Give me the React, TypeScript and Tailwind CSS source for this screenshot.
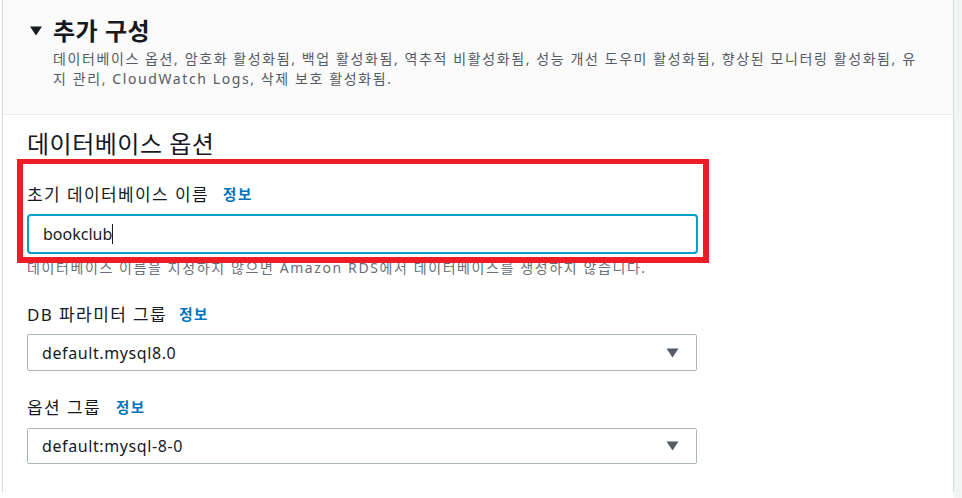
import React from "react";

const FONT = { fontFamily: '"Noto Sans", "Noto Sans CJK KR", sans-serif' };

function Caret() {
  return (
    <svg width="13" height="10" viewBox="0 0 13 10" className="shrink-0">
      <path d="M0.5 0.5 H12.5 L6.5 9.5 Z" fill="#545b64" />
    </svg>
  );
}

function SelectBox({ value, h }: { value: string; h: string }) {
  return (
    <div className={`w-[670px] ${h} border border-[#aab7b8] rounded-[2px] bg-white flex items-center justify-between pl-[14px] pr-[17px]`}>
      <span className="text-[16px] tracking-[0.6px] text-[#16191f]">{value}</span>
      <Caret />
    </div>
  );
}

function Label({ text, gap }: { text: string; gap: string }) {
  return (
    <div className={`flex items-center ${gap} h-[20px]`}>
      <span className="text-[17px] tracking-[1.4px] text-[#16191f]">{text}</span>
      <span className="text-[14.5px] tracking-[1.5px] font-bold text-[#0073bb]">정보</span>
    </div>
  );
}

export default function App() {
  return (
    <div className="w-[962px] h-[498px] bg-white flex overflow-hidden" style={FONT}>
      <div className="w-[2px] shrink-0" />
      <div className="w-[952px] shrink-0 h-[492px] border-l border-r border-[#d5dbdb] flex flex-col relative">
        <div className="h-[115px] shrink-0 bg-[#fafafa] border-b border-[#eaeded] pt-[16px] pl-[27px]">
          <div className="flex items-center gap-[11px] h-[30px]">
            <svg width="12" height="10" viewBox="0 0 12 10">
              <path d="M0 0.5 H12 L6 9.5 Z" fill="#16191f" />
            </svg>
            <span className="text-[24px] tracking-[0.5px] font-bold text-[#16191f] leading-[30px]">추가 구성</span>
          </div>
          <p className="mt-[3px] ml-[23px] text-[14px] leading-[20px] tracking-[1.6px] text-[#545b64] w-[870px]">
            데이터베이스 옵션, 암호화 활성화됨, 백업 활성화됨, 역추적 비활성화됨, 성능 개선 도우미 활성화됨, 향상된 모니터링 활성화됨, 유지 관리, CloudWatch Logs, 삭제 보호 활성화됨.
          </p>
        </div>
        <div className="pl-[24px] pt-[14px] flex flex-col">
          <h2 className="text-[24px] tracking-[0.5px] leading-[30px] text-[#16191f] font-normal">데이터베이스 옵션</h2>
          <div className="mt-[26px]">
            <Label text="초기 데이터베이스 이름" gap="gap-[14px]" />
          </div>
          <div className="mt-[9px] w-[671px] h-[40px] border-2 border-[#00a1c9] rounded-[4px] bg-white flex items-center pl-[14px]">
            <span className="text-[16px] text-[#16191f]">bookclub</span>
            <span className="w-[1px] h-[20px] bg-[#16191f]" />
          </div>
          <p className="mt-[5px] text-[14px] leading-[18px] tracking-[1.6px] text-[#687078] whitespace-nowrap">
            데이터베이스 이름을 지정하지 않으면 Amazon RDS에서 데이터베이스를 생성하지 않습니다.
          </p>
          <div className="mt-[28px]">
            <Label text="DB 파라미터 그룹" gap="gap-[12px]" />
          </div>
          <div className="mt-[9px]">
            <SelectBox value="default.mysql8.0" h="h-[37px]" />
          </div>
          <div className="mt-[27px]">
            <Label text="옵션 그룹" gap="gap-[15px]" />
          </div>
          <div className="mt-[10px]">
            <SelectBox value="default:mysql-8-0" h="h-[36px]" />
          </div>
        </div>
        <div className="absolute left-[14px] top-[159px] w-[692px] h-[104px] border-[6px] border-t-[5px] border-[#ee1c25] pointer-events-none" />
      </div>
      <div className="flex-1 bg-[#f2f3f3]" />
    </div>
  );
}
